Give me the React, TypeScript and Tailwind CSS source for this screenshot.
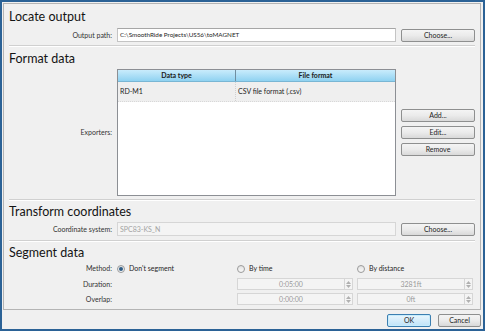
import type { ReactNode } from "react";

function Btn({ children, className = "" }: { children: ReactNode; className?: string }) {
  return (
    <div
      className={
        "h-[13px] flex items-center justify-center rounded-[2px] border border-[#8e8f8f] bg-gradient-to-b from-[#f4f4f4] via-[#ebebeb] to-[#d9d9d9] text-[7px] text-[#1e1e1e] " +
        className
      }
    >
      {children}
    </div>
  );
}

function Heading({ children }: { children: ReactNode }) {
  return <div className="mt-[3px] h-[15px] leading-[15px] text-[12.5px] text-[#141414]">{children}</div>;
}

function Sep({ className = "" }: { className?: string }) {
  return <div className={"h-[2px] w-[466px] border-t border-[#d0d0d0] border-b border-b-white " + className} />;
}

function Radio({ checked, label }: { checked?: boolean; label: string }) {
  return (
    <div className="flex items-center gap-[4px]">
      <span className="w-[8px] h-[8px] rounded-full border border-[#9a9a9a] bg-gradient-to-b from-[#e2e2e2] to-[#fafafa] flex items-center justify-center">
        {checked && <span className="w-[4px] h-[4px] rounded-full bg-[#2e5d86]" />}
      </span>
      <span>{label}</span>
    </div>
  );
}

function Spin({ value }: { value: string }) {
  return (
    <div className="w-[116px] h-[12px] flex border border-[#d6d6d6] bg-[#f4f4f4] text-[#9a9a9a]">
      <div className="flex-1 flex items-center justify-center">{value}</div>
      <div className="w-[8px] border-l border-[#d6d6d6] flex flex-col items-center justify-center gap-[1px]">
        <svg width="5" height="3" viewBox="0 0 5 3"><path d="M0 3 L2.5 0 L5 3 Z" fill="#b0b0b0" /></svg>
        <svg width="5" height="3" viewBox="0 0 5 3"><path d="M0 0 L2.5 3 L5 0 Z" fill="#b0b0b0" /></svg>
      </div>
    </div>
  );
}

export default function App() {
  const label = "w-[104px] text-right pr-[1px] text-[#333]";
  return (
    <div className="w-[485px] h-[331px] bg-[#f0f0f0] border-2 border-[#2b6296] flex flex-col font-['Lato',sans-serif] text-[7px] text-[#1e1e1e]">
      <div className="ml-px mr-[2px] mt-px h-[307px] border border-[#b4b4b4] pl-[5px] flex flex-col">
        {/* Locate output */}
        <div className="mt-[2px]">
          <Heading>Locate output</Heading>
        </div>
        <div className="mt-[4px] h-[14px] flex items-center">
          <div className={label}>Output path:</div>
          <div className="ml-[4px] w-[279px] h-[14px] border border-[#c4c4c4] border-t-[#a6a6a6] bg-white flex items-center pl-[2px] text-[6.3px]">
            C:\SmoothRide Projects\US56\toMAGNET
          </div>
          <Btn className="ml-[5px] w-[74px]">Choose...</Btn>
        </div>
        <Sep className="mt-[3px]" />

        {/* Format data */}
        <div className="mt-[1px]">
          <Heading>Format data</Heading>
        </div>
        <div className="mt-[3px] flex">
          <div className={label + " flex items-center justify-end"}>Exporters:</div>
          <div className="ml-[4px] w-[279px] h-[127px] border border-[#8c8f94] bg-white flex flex-col">
            <div className="h-[12px] flex bg-gradient-to-b from-[#c9ecfc] to-[#8fd2f1] border-b border-[#79b6d4] font-bold text-[#1a1a1a]">
              <div className="w-[118px] border-r border-[#6f8ea0] flex items-center justify-center">Data type</div>
              <div className="flex-1 flex items-center justify-center">File format</div>
            </div>
            <div className="h-[20px] flex bg-[#efefef] border-b border-dotted border-[#d8d8d8]">
              <div className="w-[118px] border-r border-dotted border-[#d0d0d0] flex items-center pl-[2px]">RD-M1</div>
              <div className="flex-1 flex items-center pl-[2px]">CSV file format (.csv)</div>
            </div>
          </div>
          <div className="ml-[5px] w-[74px] mt-[40px] flex flex-col gap-[4px]">
            <Btn>Add...</Btn>
            <Btn>Edit...</Btn>
            <Btn>Remove</Btn>
          </div>
        </div>
        <Sep className="mt-[3px]" />

        {/* Transform coordinates */}
        <Heading>Transform coordinates</Heading>
        <div className="mt-[3px] h-[14px] flex items-center">
          <div className={label}>Coordinate system:</div>
          <div className="ml-[4px] w-[279px] h-[14px] border border-[#d6d6d6] bg-[#f4f4f4] flex items-center pl-[2px] text-[#a3a3a3]">
            SPC83-KS_N
          </div>
          <Btn className="ml-[5px] w-[74px]">Choose...</Btn>
        </div>
        <Sep className="mt-[4px]" />

        {/* Segment data */}
        <Heading>Segment data</Heading>
        <div className="mt-[3px] h-[11px] flex items-center">
          <div className={label}>Method:</div>
          <div className="ml-[4px] w-[120px]"><Radio checked label="Don't segment" /></div>
          <div className="w-[120px]"><Radio label="By time" /></div>
          <div className="w-[120px]"><Radio label="By distance" /></div>
        </div>
        <div className="mt-[4px] h-[12px] flex items-center">
          <div className={label}>Duration:</div>
          <div className="ml-[124px] w-[120px]"><Spin value="0:05:00" /></div>
          <div className="w-[120px]"><Spin value="3281ft" /></div>
        </div>
        <div className="mt-[3px] h-[12px] flex items-center">
          <div className={label}>Overlap:</div>
          <div className="ml-[124px] w-[120px]"><Spin value="0:00:00" /></div>
          <div className="w-[120px]"><Spin value="0ft" /></div>
        </div>
      </div>

      <div className="mt-[4px] pr-[2px] flex justify-end gap-[7px]">
        <div className="w-[44px] h-[13px] rounded-[2px] border border-[#3c7fb1] bg-gradient-to-b from-[#eaf6fd] to-[#bfe3f8] shadow-[inset_0_0_0_1px_#c7ecfc] flex items-center justify-center text-[7px]">
          OK
        </div>
        <Btn className="w-[43px]">Cancel</Btn>
      </div>
    </div>
  );
}
